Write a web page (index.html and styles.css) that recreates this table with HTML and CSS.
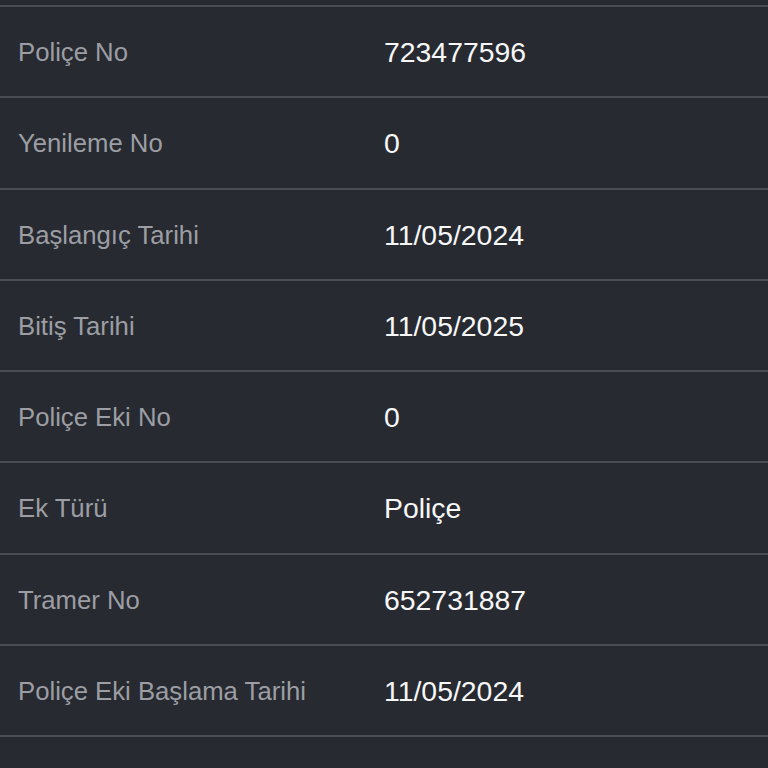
FILE: index.html
```html
<!DOCTYPE html>
<html lang="tr">
<head>
    <meta charset="utf-8">
    <title>Poliçe Bilgileri</title>
    <link rel="stylesheet" href="styles.css">
</head>
<body>
    <div class="details">
        <div class="row"><span class="label">Poliçe No</span><span class="value">723477596</span></div>
        <div class="row"><span class="label">Yenileme No</span><span class="value">0</span></div>
        <div class="row"><span class="label">Başlangıç Tarihi</span><span class="value">11/05/2024</span></div>
        <div class="row"><span class="label">Bitiş Tarihi</span><span class="value">11/05/2025</span></div>
        <div class="row"><span class="label">Poliçe Eki No</span><span class="value">0</span></div>
        <div class="row"><span class="label">Ek Türü</span><span class="value">Poliçe</span></div>
        <div class="row"><span class="label">Tramer No</span><span class="value">652731887</span></div>
        <div class="row"><span class="label">Poliçe Eki Başlama Tarihi</span><span class="value">11/05/2024</span></div>
        <div class="row row-end"></div>
    </div>
</body>
</html>
```

FILE: styles.css
```css
html, body {
    margin: 0;
    background: #272a31;
}

body {
    font-family: "Liberation Sans", Arial, Helvetica, sans-serif;
}

.details {
    padding-top: 5px;
}

.row {
    box-sizing: border-box;
    height: 91.25px;
    border-top: 2px solid #4a4d54;
    display: flex;
    align-items: center;
    padding: 2px 0 0 18px;
}

.row-end {
    height: 28px;
}

.label {
    width: 366px;
    font-size: 25.7px;
    color: #9c9ea3;
}

.value {
    font-size: 28.4px;
    color: #f7f7f7;
}
```
